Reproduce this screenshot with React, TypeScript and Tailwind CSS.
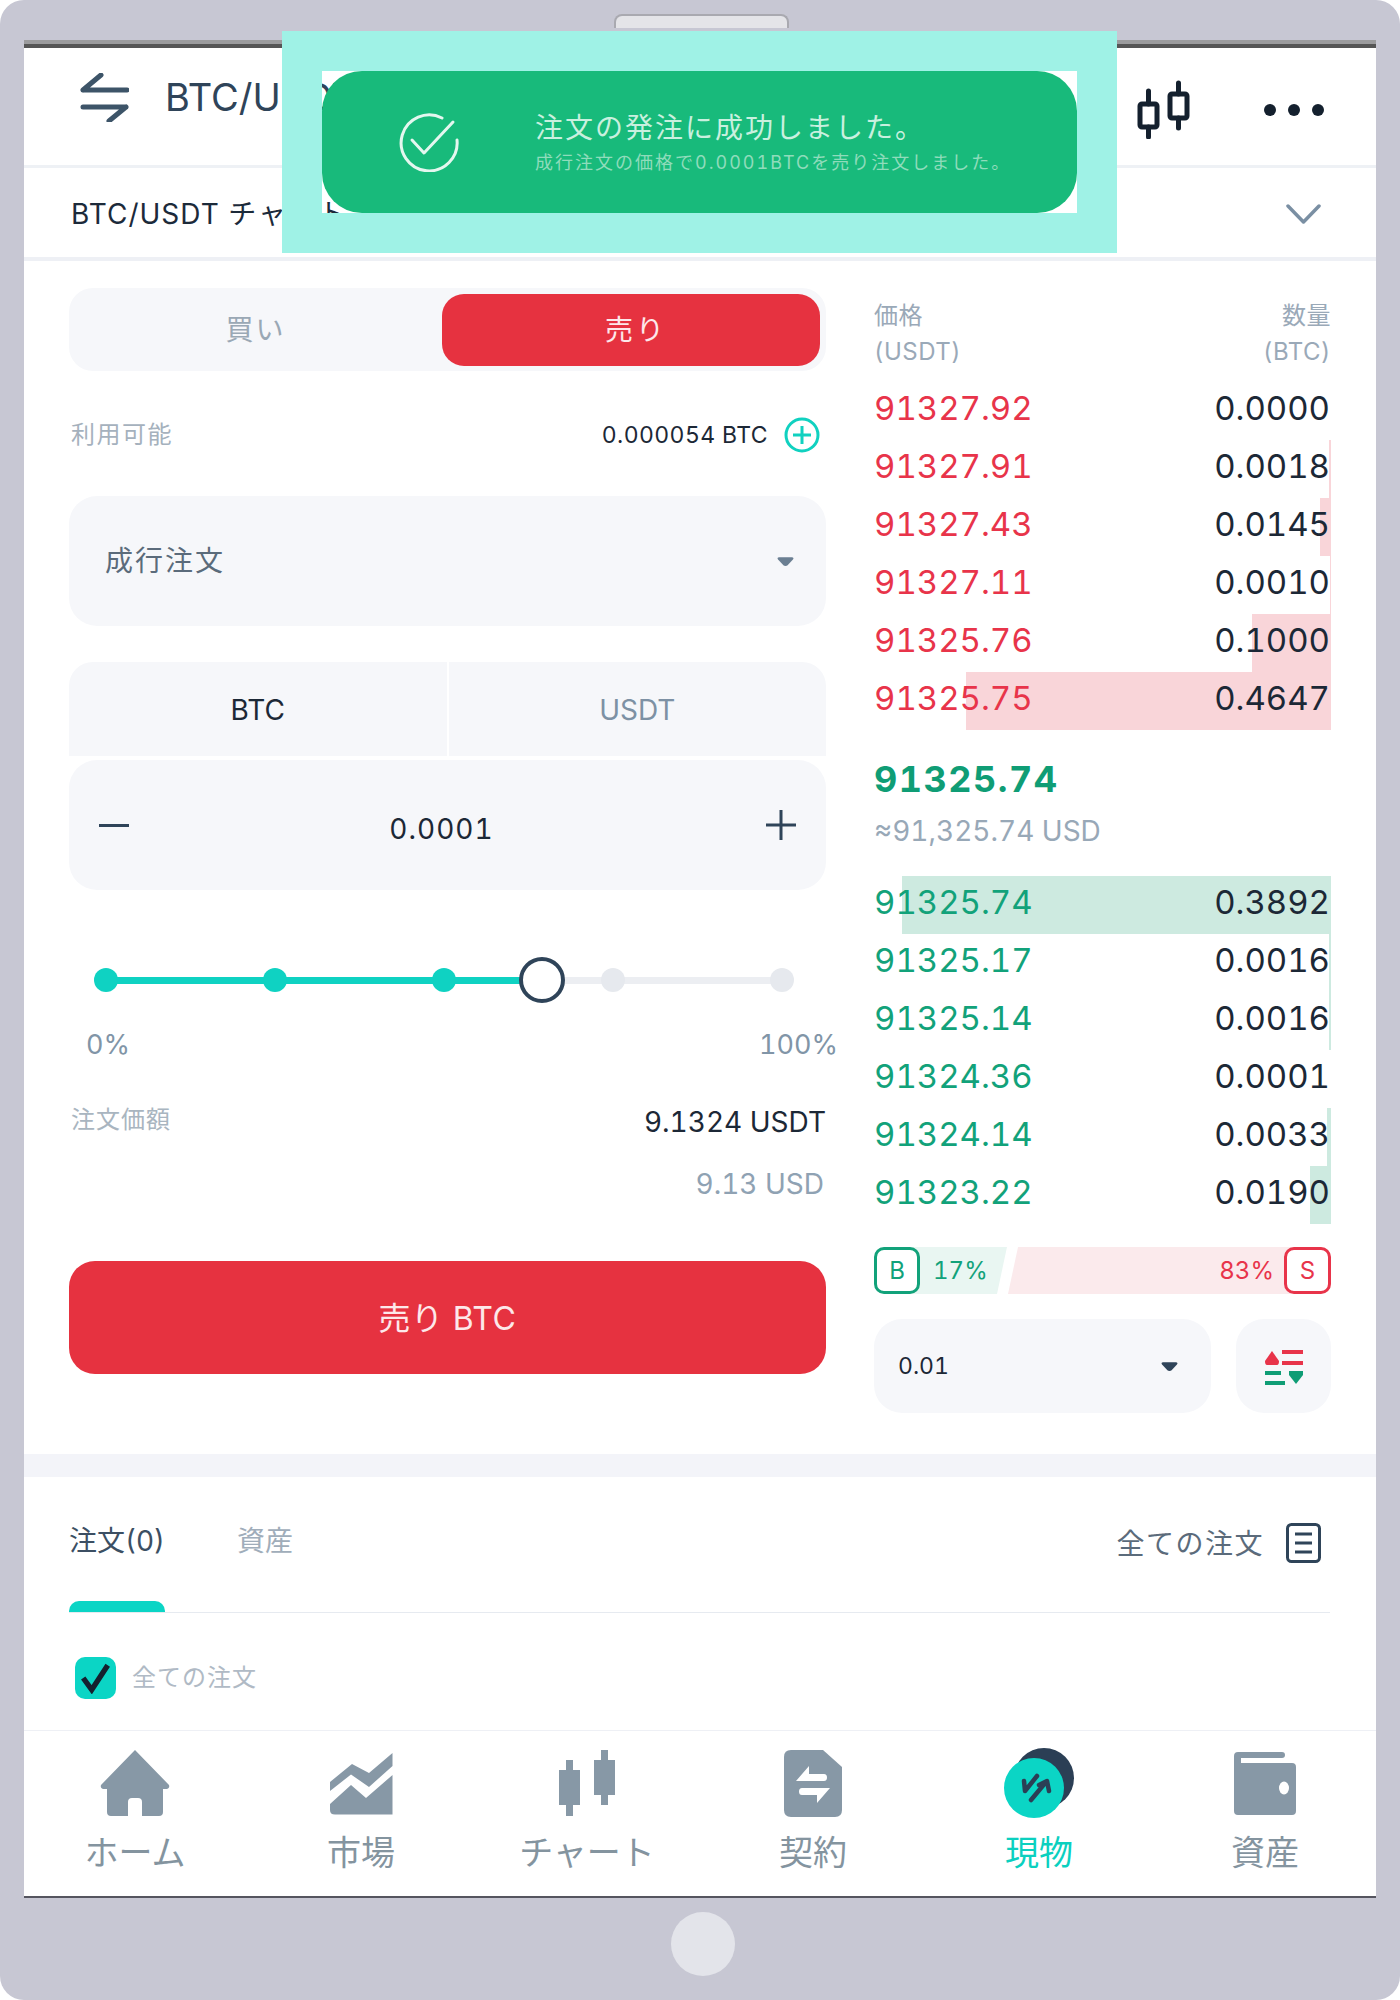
const asks = [
  { price: "91327.92", qty: "0.0000", bar: 0 },
  { price: "91327.91", qty: "0.0018", bar: 2 },
  { price: "91327.43", qty: "0.0145", bar: 11 },
  { price: "91327.11", qty: "0.0010", bar: 1 },
  { price: "91325.76", qty: "0.1000", bar: 79 },
  { price: "91325.75", qty: "0.4647", bar: 365 },
];

const bids = [
  { price: "91325.74", qty: "0.3892", bar: 429 },
  { price: "91325.17", qty: "0.0016", bar: 2 },
  { price: "91325.14", qty: "0.0016", bar: 2 },
  { price: "91324.36", qty: "0.0001", bar: 0 },
  { price: "91324.14", qty: "0.0033", bar: 4 },
  { price: "91323.22", qty: "0.0190", bar: 21 },
];

function BookRow({ price, qty, bar, side }: { price: string; qty: string; bar: number; side: "ask" | "bid" }) {
  return (
    <div className="relative flex h-[58px] items-center justify-between pb-[4px] pr-px text-[33px]">
      <div
        className={`absolute inset-y-0 right-0 ${side === "ask" ? "bg-[#f9d5d9]" : "bg-[#cdeae0]"}`}
        style={{ width: bar }}
      />
      <span className={`relative ${side === "ask" ? "text-[#e8344a]" : "text-[#12a27a]"}`}>{price}</span>
      <span className="relative text-[#1c2836]">{qty}</span>
    </div>
  );
}

function Caret({ className }: { className: string }) {
  return (
    <svg viewBox="0 0 16 10" className={className}>
      <path d="M2 1h12c1.500 0 2 1 1 2.200l-5 5.300c-1 1-3 1-4 0L1 3.200C0 2 .5 1 2 1z" fill="currentColor" />
    </svg>
  );
}

function NavItem({ label, active, children }: { label: string; active?: boolean; children: React.ReactNode }) {
  return (
    <div className="flex flex-col items-center pt-[17px]">
      <div className="flex h-[70px] items-center justify-center">{children}</div>
      <div className={`mt-[12px] flex h-[44px] items-center text-[34px] ${active ? "text-[#0bd0bf]" : "text-[#84949f]"}`}>
        {label}
      </div>
    </div>
  );
}

export default function App() {
  return (
    <div className="h-[2000px] w-[1400px] bg-white font-['Inter','Noto_Sans_CJK_JP',sans-serif] tabular-nums">
      <div className="relative flex h-[2000px] flex-col rounded-[24px] bg-[#c7c7d3] px-[24px] pt-[14px]">
        <div className="ml-[590px] h-[14px] w-[175px] rounded-t-[8px] border-2 border-b-0 border-[#a9a9b0] bg-[#e4e4e8]" />
        <div className="mt-[12px] h-[4px] bg-[#9b9b9d]" />
        <div className="h-[4px] bg-[#555]" />

        <div className="flex h-[1850px] flex-col border-b-2 border-[#55555f] bg-white">
          {/* top bar */}
          <div className="flex h-[120px] items-center border-b-[3px] border-[#eef1f5] pl-[56px] pr-[52px]">
            <div className="mb-[18px] flex items-center">
              <svg viewBox="0 0 49 49" className="h-[49px] w-[49px]" fill="none" stroke="#3d5468" strokeWidth="5" strokeLinecap="round">
                <path d="M3 17H47M21 2L3 17" />
                <path d="M3 34H46M46 34L29 48" />
              </svg>
              <span className="ml-[36px] text-[38px] text-[#2f4459]">BTC/USDT</span>
            </div>
            <div className="ml-auto mt-[6px] flex items-center">
              <svg viewBox="0 0 53 59" className="h-[59px] w-[53px]" fill="none" stroke="#14202e" strokeWidth="5" strokeLinecap="round" strokeLinejoin="round">
                <rect x="3" y="24" width="17" height="23" rx="2" />
                <path d="M11.500 11V24M11.500 47V57" />
                <rect x="33" y="14" width="17" height="24" rx="2" />
                <path d="M41.500 3V14M41.500 38V48" />
              </svg>
              <div className="ml-[74px] flex gap-[12px]">
                <div className="h-[12px] w-[12px] rounded-full bg-[#14202e]" />
                <div className="h-[12px] w-[12px] rounded-full bg-[#14202e]" />
                <div className="h-[12px] w-[12px] rounded-full bg-[#14202e]" />
              </div>
            </div>
          </div>

          {/* chart toggle */}
          <div className="flex h-[93px] items-center justify-between border-b-[4px] border-[#eef0f5] pl-[47px] pr-[55px] pt-[2px]">
            <span className="text-[28px] tracking-[1px] text-[#1c2a3a]">
              BTC/USDT <span className="tracking-[2px]">チャート</span>
            </span>
            <svg viewBox="0 0 35 20" className="h-[20px] w-[35px]" fill="none" stroke="#7a8fa3" strokeWidth="3.500" strokeLinecap="round" strokeLinejoin="round">
              <path d="M2 2L17.500 18L33 2" />
            </svg>
          </div>

          {/* trade panel */}
          <div className="flex h-[1193px] gap-[48px] pl-[45px] pr-[45px]">
            <div className="w-[757px] pt-[27px]">
              <div className="flex h-[83px] items-center rounded-[24px] bg-[#f6f7fa] pr-[6px] text-[28px] tracking-[2px]">
                <div className="flex-1 text-center text-[#9aa8b5]">買い</div>
                <div className="flex h-[72px] w-[378px] items-center justify-center rounded-[22px] bg-[#e63240] pl-[10px] tracking-[3px] text-[#fde8ea]">売り</div>
              </div>

              <div className="mt-[44px] flex h-[40px] items-center justify-between pl-[2px]">
                <span className="text-[24px] tracking-[1.500px] text-[#a5b1bd]">利用可能</span>
                <div className="flex items-center">
                  <span className="text-[23px] tracking-[0.400px] text-[#1c2836]">0.000054 BTC</span>
                  <svg viewBox="0 0 36 36" className="ml-[16px] mr-[6px] h-[36px] w-[36px]" fill="none" stroke="#10d1c0" strokeWidth="3">
                    <circle cx="18" cy="18" r="16" />
                    <path d="M18 9V27M9 18H27" />
                  </svg>
                </div>
              </div>

              <div className="mt-[41px] flex h-[130px] items-center justify-between rounded-[28px] bg-[#f6f7fa] pl-[36px] pr-[32px]">
                <span className="text-[28px] tracking-[2px] text-[#5b6b7b]">成行注文</span>
                <Caret className="h-[11px] w-[17px] text-[#6b7f92]" />
              </div>

              <div className="mt-[36px] flex h-[94px] text-[28px]">
                <div className="flex flex-1 items-center justify-center rounded-tl-[24px] bg-[#f6f7fa] pt-[2px] text-[#1c2836]">BTC</div>
                <div className="ml-[2px] flex flex-1 items-center justify-center rounded-tr-[24px] bg-[#f6f7fa] pt-[2px] text-[#7d91a4]">USDT</div>
              </div>

              <div className="mt-[4px] flex h-[130px] items-center justify-between rounded-[28px] bg-[#f6f7fa] pl-[30px] pr-[30px]">
                <div className="h-[3px] w-[30px] bg-[#2f4459]" />
                <span className="mr-[12px] mt-[8px] text-[28px] tracking-[1px] text-[#1c2836]">0.0001</span>
                <svg viewBox="0 0 30 30" className="h-[30px] w-[30px]" stroke="#2f4459" strokeWidth="3">
                  <path d="M15 0V30M0 15H30" />
                </svg>
              </div>

              {/* slider */}
              <div className="relative mt-[67px] flex h-[46px] items-center justify-between pl-[25px] pr-[32px]">
                <div className="absolute left-[37px] right-[44px] h-[7px] rounded-full bg-[#eceef2]" />
                <div className="absolute left-[37px] h-[7px] w-[436px] bg-[#0fd2c2]" />
                <div className="relative h-[24px] w-[24px] rounded-full bg-[#0fd2c2]" />
                <div className="relative h-[24px] w-[24px] rounded-full bg-[#0fd2c2]" />
                <div className="relative h-[24px] w-[24px] rounded-full bg-[#0fd2c2]" />
                <div className="relative h-[24px] w-[24px] rounded-full bg-[#e6e9ee]" />
                <div className="relative h-[24px] w-[24px] rounded-full bg-[#e6e9ee]" />
                <div className="absolute left-[450px] h-[46px] w-[46px] rounded-full border-[4px] border-[#2f4459] bg-white" />
              </div>

              <div className="-mr-[12px] mt-[22px] flex h-[40px] items-center justify-between pl-[17px] text-[27px] text-[#8195a7]">
                <span>0%</span>
                <span>100%</span>
              </div>

              <div className="mt-[35px] flex h-[40px] items-center justify-between pl-[2px]">
                <span className="text-[24px] tracking-[1px] text-[#a9b5c0]">注文価額</span>
                <span className="mt-[4px] text-[28px] text-[#1c2836]">9.1324 USDT</span>
              </div>
              <div className="mt-[24px] flex h-[40px] items-center justify-end pr-[2px] text-[28px] text-[#8fa2b3]">9.13 USD</div>

              <div className="mt-[57px] flex h-[113px] items-center justify-center rounded-[26px] bg-[#e63240] pt-[2px] text-[32px] tracking-[0.500px] text-[#fde8ea]">
                売り BTC
              </div>
            </div>

            {/* order book */}
            <div className="flex-1 pt-[37px]">
              <div className="flex justify-between text-[24px] leading-[36px] tracking-[0.500px] text-[#9aa9b8]">
                <div>
                  <div>価格</div>
                  <div>(USDT)</div>
                </div>
                <div className="text-right">
                  <div>数量</div>
                  <div>(BTC)</div>
                </div>
              </div>

              <div className="mt-[12px]">
                {asks.map((row) => (
                  <BookRow key={row.price} {...row} side="ask" />
                ))}
              </div>

              <div className="mt-[27px] flex h-[44px] items-center text-[36px] font-bold tracking-[1.500px] text-[#0f9d75]">91325.74</div>
              <div className="mt-[10px] flex h-[40px] items-center text-[28px] text-[#98a8b7]">≈91,325.74 USD</div>

              <div className="mt-[25px]">
                {bids.map((row) => (
                  <BookRow key={row.price} {...row} side="bid" />
                ))}
              </div>

              <div className="mt-[23px] flex h-[47px] text-[24px]">
                <div className="flex w-[133px] items-center rounded-l-[10px] bg-[#e9f6f2] [clip-path:polygon(0_0,100%_0,calc(100%-10px)_100%,0_100%)]">
                  <div className="flex h-[47px] w-[46px] items-center justify-center rounded-[10px] border-[3px] border-[#12a27a] bg-white text-[#12a27a]">B</div>
                  <span className="ml-[13px] text-[#12a27a]">17%</span>
                </div>
                <div className="ml-px flex flex-1 items-center justify-end rounded-r-[10px] bg-[#fbeaec] [clip-path:polygon(10px_0,100%_0,100%_100%,0_100%)]">
                  <span className="mr-[10px] text-[#e8344a]">83%</span>
                  <div className="flex h-[47px] w-[47px] items-center justify-center rounded-[10px] border-[3px] border-[#e8344a] bg-white text-[#e8344a]">S</div>
                </div>
              </div>

              <div className="mt-[25px] flex h-[94px] gap-[25px]">
                <div className="flex flex-1 items-center justify-between rounded-[28px] bg-[#f6f7fa] pl-[24px] pr-[33px]">
                  <span className="text-[23px] text-[#1c2836]">0.01</span>
                  <Caret className="h-[11px] w-[17px] text-[#2f4459]" />
                </div>
                <div className="flex w-[95px] items-center justify-center rounded-[28px] bg-[#f6f7fa]">
                  <svg viewBox="0 0 38 35" className="mt-[2px] h-[35px] w-[38px]">
                    <path d="M7 1L14 11Q14 15 12 15H2Q0 15 0 11Z" fill="#e8344a" />
                    <path d="M17 0H38V4H17ZM17 11H38V15H17Z" fill="#e8344a" />
                    <path d="M0 21H16V25H0ZM0 31H20V35H0Z" fill="#0f9d75" />
                    <path d="M24 21H38V25L31 34L24 25Z" fill="#0f9d75" />
                  </svg>
                </div>
              </div>
            </div>
          </div>

          <div className="h-[23px] bg-[#f3f4f9]" />

          {/* orders */}
          <div className="flex h-[253px] flex-col pl-[45px] pr-[46px]">
            <div className="flex h-[136px] justify-between border-b border-[#e6eaf0] pt-[44px]">
              <div className="flex gap-[70px] text-[28px]">
                <div className="w-[98px]">
                  <div className="flex h-[40px] items-center whitespace-nowrap text-[#3c4f63]">注文(0)</div>
                  <div className="mt-[40px] h-[11px] w-[96px] rounded-t-[10px] bg-[#0bd5c5]" />
                </div>
                <div className="flex h-[40px] items-center text-[#a0adba]">資産</div>
              </div>
              <div className="mt-[2px] flex h-[40px] items-center pr-[9px]">
                <span className="mt-[2px] text-[28px] tracking-[1.500px] text-[#5b6b7b]">全ての注文</span>
                <svg viewBox="0 0 35 40" className="ml-[22px] h-[40px] w-[35px]" fill="none" stroke="#2f4459" strokeWidth="3">
                  <rect x="1.500" y="1.500" width="32" height="37" rx="4" />
                  <path d="M9 11H26M9 20H26M9 29H26" />
                </svg>
              </div>
            </div>
            <div className="flex pl-[6px] pt-[44px]">
              <div className="flex h-[42px] w-[41px] items-center justify-center rounded-[10px] bg-[#0bd5c5]">
                <svg viewBox="0 0 30 30" className="h-[32px] w-[32px]" fill="none" stroke="#14202e" strokeWidth="5">
                  <path d="M3 15L11 26L26 3" />
                </svg>
              </div>
              <span className="ml-[16px] flex h-[42px] items-center text-[24px] tracking-[1px] text-[#b0bac5]">全ての注文</span>
            </div>
          </div>

          {/* bottom nav */}
          <div className="flex-1 border-t border-[#eef0f5]">
            <div className="-mx-[2px] grid grid-cols-6">
              <NavItem label="ホーム">
                <svg viewBox="0 0 70 66" className="h-[66px] w-[70px]" fill="#8798a6">
                  <path d="M35 0L69 35Q70 38 67 39H63V62Q63 66 59 66H42V52Q42 48 38 48H32Q28 48 28 52V66H11Q7 66 7 62V39H3Q0 38 1 35Z" />
                </svg>
              </NavItem>
              <NavItem label="市場">
                <svg viewBox="0 0 63 63" className="h-[63px] w-[63px]" fill="#8798a6">
                  <path d="M62.500 1L39 21L22 12L0 30V39L21 22.500L39 35L62.500 14Z" />
                  <path d="M62.500 23L36 46L21 33L0 52V58Q0 62.500 5 62.500H62.500Z" />
                </svg>
              </NavItem>
              <NavItem label="チャート">
                <svg viewBox="0 0 56 66" className="h-[66px] w-[56px]" fill="#8798a6">
                  <path d="M7 10H14V20H21V55H14V66H7V55H0V20H7Z" />
                  <path d="M42 0H49V10H56V45H49V55H42V45H35V10H42Z" />
                </svg>
              </NavItem>
              <NavItem label="契約">
                <svg viewBox="0 0 58 67" className="h-[67px] w-[58px]">
                  <path d="M7 0H39L58 17V60Q58 67 51 67H7Q0 67 0 60V7Q0 0 7 0Z" fill="#8798a6" />
                  <path d="M12 31L25 16V24H40Q43 24 43 27.500Q43 31 40 31Z" fill="#fff" />
                  <path d="M46 38L33 53V45H18Q15 45 15 41.500Q15 38 18 38Z" fill="#fff" />
                </svg>
              </NavItem>
              <NavItem label="現物" active>
                <svg viewBox="0 0 70 70" className="h-[70px] w-[70px]">
                  <circle cx="40" cy="30" r="30" fill="#2b3f55" />
                  <circle cx="30" cy="40" r="30" fill="#0bd5c5" />
                  <path d="M20 33L21 43L33 28M27 52L42 34M35 37L43 33L45 43" fill="none" stroke="#2b3f55" strokeWidth="4.500" strokeLinecap="round" strokeLinejoin="round" />
                </svg>
              </NavItem>
              <NavItem label="資産">
                <svg viewBox="0 0 62 63" className="h-[63px] w-[62px]">
                  <path d="M4 0H48A3 3 0 0 1 48 6H7V11H58A4 4 0 0 1 62 15V59A4 4 0 0 1 58 63H4A4 4 0 0 1 0 59V4A4 4 0 0 1 4 0Z" fill="#8798a6" />
                  <ellipse cx="50" cy="36" rx="5" ry="6.500" fill="#fff" />
                </svg>
              </NavItem>
            </div>
          </div>
        </div>

        <div className="ml-[647px] mt-[14px] h-[64px] w-[64px] rounded-full bg-[#e3e4ea]" />

        {/* toast */}
        <div className="absolute left-[282px] top-[31px] h-[222px] w-[835px] border-[40px] border-[#9ff2e6]">
          <div className="flex h-[142px] items-center rounded-[40px] bg-[#18ba7b] pl-[77px]">
            <svg viewBox="0 0 60 60" className="h-[60px] w-[60px]" fill="none" stroke="#e4f7ef" strokeWidth="3" strokeLinecap="round" strokeLinejoin="round">
              <path d="M43 6A28 28 0 1 0 58 28" />
              <path d="M13 28L25 41L54 10" />
            </svg>
            <div className="ml-[76px] pt-[3px]">
              <div className="text-[28px] leading-[36px] tracking-[2px] text-[#c9f0df]">注文の発注に成功しました。</div>
              <div className="mt-[3px] text-[18px] leading-[28px] tracking-[2px] text-[#8fdcbb]">成行注文の価格で0.0001BTCを売り注文しました。</div>
            </div>
          </div>
        </div>
      </div>
    </div>
  );
}
